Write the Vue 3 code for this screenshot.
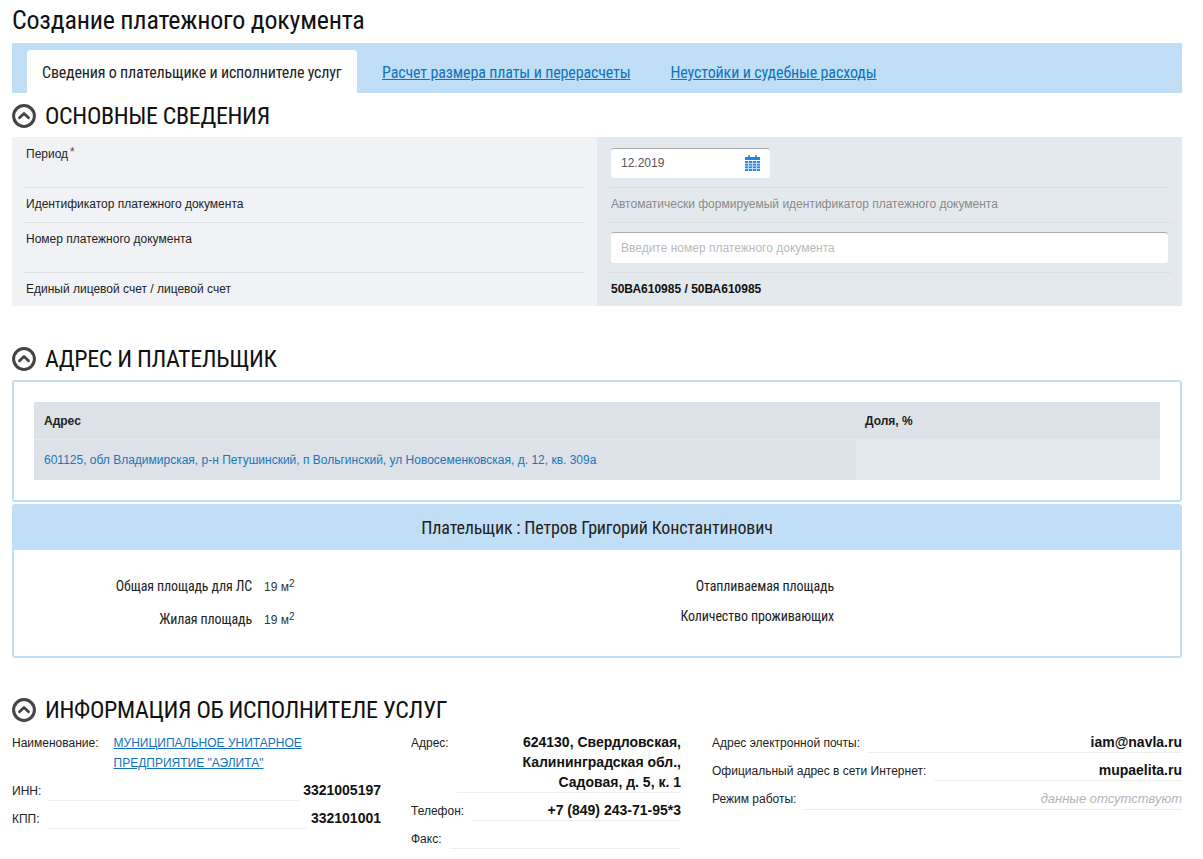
<script setup>
const leftRows = [
  { cls: 'h51', label: 'Период', req: true },
  { cls: 'h35', label: 'Идентификатор платежного документа' },
  { cls: 'h50', label: 'Номер платежного документа' },
  { cls: 'h33', label: 'Единый лицевой счет / лицевой счет' }
]
const sections = { main: 'ОСНОВНЫЕ СВЕДЕНИЯ', addr: 'АДРЕС И ПЛАТЕЛЬЩИК', info: 'ИНФОРМАЦИЯ ОБ ИСПОЛНИТЕЛЕ УСЛУГ' }
</script>

<template>
  <div class="page">
    <h1 class="title">Создание платежного документа</h1>
    <div class="tabs">
      <div class="tab active">Сведения о плательщике и исполнителе услуг</div>
      <a class="tab link">Расчет размера платы и перерасчеты</a>
      <a class="tab link">Неустойки и судебные расходы</a>
    </div>

    <div class="sec-head first">
      <svg class="chev" width="24" height="24" viewBox="0 0 24 24"><circle cx="12" cy="12" r="10.400" fill="none" stroke="#444" stroke-width="3"/><path d="M7.500 13.800 L12 9.500 L16.500 13.800" fill="none" stroke="#444" stroke-width="2.800" stroke-linejoin="round" stroke-linecap="round"/></svg>
      <span>{{ sections.main }}</span>
    </div>
    <div class="main-grid">
      <div class="col-l">
        <div v-for="r in leftRows" :key="r.label" class="cell" :class="r.cls">
          <span>{{ r.label }}</span><sup v-if="r.req" class="req">*</sup>
        </div>
      </div>
      <div class="col-r">
        <div class="cell h51 in">
          <div class="input date">
            <span>12.2019</span>
            <svg class="cal" width="15" height="16" viewBox="0 0 15 16">
              <path d="M3 0h2v2H3zM10 0h2v2h-2z" fill="#4aa3e8"/>
              <path d="M0 2h15v3H0z" fill="#1f86e0"/>
              <path d="M0 6h15v10H0z" fill="#2b8ce2"/>
              <path d="M0 8.500h15M0 11h15M0 13.500h15M3.500 6v10M7.500 6v10M11.500 6v10" stroke="#c9e0f7" stroke-width="0.900" fill="none"/>
            </svg>
          </div>
        </div>
        <div class="cell h35 muted">Автоматически формируемый идентификатор платежного документа</div>
        <div class="cell h50 in second-in"><div class="input wide placeholder">Введите номер платежного документа</div></div>
        <div class="cell h33 strong">50ВА610985 / 50ВА610985</div>
      </div>
    </div>

    <div class="sec-head second">
      <svg class="chev" width="24" height="24" viewBox="0 0 24 24"><circle cx="12" cy="12" r="10.400" fill="none" stroke="#444" stroke-width="3"/><path d="M7.500 13.800 L12 9.500 L16.500 13.800" fill="none" stroke="#444" stroke-width="2.800" stroke-linejoin="round" stroke-linecap="round"/></svg>
      <span>{{ sections.addr }}</span>
    </div>
    <div class="box addr-box">
      <div class="atable">
        <div class="th a">Адрес</div><div class="th b">Доля, %</div>
        <div class="td a"><span class="addr-link">601125, обл Владимирская, р-н Петушинский, п Вольгинский, ул Новосеменковская, д. 12, кв. 309а</span></div>
        <div class="td b"></div>
      </div>
    </div>
    <div class="box payer">
      <div class="payer-head">Плательщик : Петров Григорий Константинович</div>
      <div class="payer-body">
        <div class="pcol">
          <div class="prow r1"><span class="plabel one">Общая площадь для ЛС</span><span class="pval">19 м<sup>2</sup></span></div>
          <div class="prow r2"><span class="plabel one">Жилая площадь</span><span class="pval">19 м<sup>2</sup></span></div>
        </div>
        <div class="pcol">
          <div class="prow r1"><span class="plabel two">Отапливаемая площадь</span></div>
          <div class="prow r3"><span class="plabel two">Количество проживающих</span></div>
        </div>
      </div>
    </div>

    <div class="sec-head third">
      <svg class="chev" width="24" height="24" viewBox="0 0 24 24"><circle cx="12" cy="12" r="10.400" fill="none" stroke="#444" stroke-width="3"/><path d="M7.500 13.800 L12 9.500 L16.500 13.800" fill="none" stroke="#444" stroke-width="2.800" stroke-linejoin="round" stroke-linecap="round"/></svg>
      <span>{{ sections.info }}</span>
    </div>
    <div class="info">
      <div class="icol c1">
        <div class="irow name"><span class="ilabel">Наименование:</span><a class="ilink">МУНИЦИПАЛЬНОЕ УНИТАРНОЕ ПРЕДПРИЯТИЕ "АЭЛИТА"</a></div>
        <div class="irow"><span class="ilabel">ИНН:</span><span class="fill"></span><b>3321005197</b></div>
        <div class="irow"><span class="ilabel">КПП:</span><span class="fill"></span><b>332101001</b></div>
      </div>
      <div class="icol c2">
        <div class="irow"><span class="ilabel">Адрес:</span><span class="ival multi"><b>624130, Свердловская, Калининградская обл., Садовая, д. 5, к. 1</b></span></div>
        <div class="irow"><span class="ilabel">Телефон:</span><span class="ival"><b>+7 (849) 243-71-95*3</b></span></div>
        <div class="irow"><span class="ilabel">Факс:</span><span class="ival"></span></div>
      </div>
      <div class="icol c3">
        <div class="irow"><span class="ilabel">Адрес электронной почты:</span><span class="ival"><b>iam@navla.ru</b></span></div>
        <div class="irow"><span class="ilabel">Официальный адрес в сети Интернет:</span><span class="ival"><b>mupaelita.ru</b></span></div>
        <div class="irow"><span class="ilabel">Режим работы:</span><span class="ival"><i>данные отсутствуют</i></span></div>
      </div>
    </div>
  </div>
</template>

<style scoped>
.page {
  width: 1170px;
  padding: 0 9px 0 12px;
  height: 859px;
  overflow: hidden;
  font-family: "Liberation Sans", Arial, sans-serif;
  font-size: 12px;
  color: #222;
}
.title, .tab, .sec-head span, .payer-head, .plabel {
  font-family: "Roboto Condensed", "Liberation Sans Narrow", Roboto, sans-serif;
  font-stretch: condensed;
}
.title { margin: 0; padding-top: 5px; height: 43px; box-sizing: border-box; font-size: 26px; line-height: 30px; font-weight: 400; color: #111; letter-spacing: -0.23px; }
.tabs { height: 50px; background: #c0dff7; display: flex; padding: 7px 0 0 15px; box-sizing: border-box; }
.tab { font-size: 16px; line-height: 45px; padding: 0 15px; letter-spacing: -0.19px; }
.tab.active { width: 330px; box-sizing: border-box; background: #fff; border-radius: 4px 4px 0 0; color: #222; white-space: nowrap; }
.tab.link { color: #1173bd; text-decoration: underline; margin: 0 0 0 10px; white-space: nowrap; letter-spacing: -0.13px; }
.sec-head { display: flex; align-items: center; height: 24px; gap: 9px; }
.sec-head span { font-size: 24px; color: #111; line-height: 24px; letter-spacing: -0.34px; }
.first { margin-top: 11px; margin-bottom: 9px; }
.second { margin-top: 41px; margin-bottom: 9px; }
.third { margin-top: 40px; margin-bottom: 10px; }
.chev { flex: none; }
.main-grid { display: grid; grid-template-columns: 585px 585px; height: 169px; }
.col-l { background: #f0f2f6; padding: 0 12px; }
.col-r { background: #e4e9ed; padding: 0 10px 0 12px; }
.cell { box-sizing: border-box; border-bottom: 1px solid #dcdfe3; padding: 9px 2px 0; line-height: 14px; color: #222; }
.cell:first-child { padding-top: 10px; }
.cell:last-child { border-bottom: 0; }
.h51 { height: 51px; }
.h50 { height: 50px; }
.h35 { height: 35px; }
.h33 { height: 33px; }
.req { color: #8b2f3f; font-size: 12px; line-height: 0; margin-left: 2px; vertical-align: 2px; }
.in { padding: 11px 2px 0; }
.cell.in:first-child { padding-top: 11px; }
.second-in { padding-top: 9px; }
.input { background: #fff; box-sizing: border-box; height: 30px; border-radius: 3px; border-top: 1px solid #a9a9a9; padding: 0 10px 1px; display: flex; align-items: center; justify-content: space-between; color: #555; }
.cal { margin-top: -1px; }
.date { width: 159px; }
.wide { width: 557px; height: 31px; }
.placeholder { color: #bbb; }
.muted { color: #8a8a8a; }
.strong { font-weight: 700; color: #111; }
.box { border: 2px solid #c0dff7; border-radius: 3px; box-sizing: border-box; }
.addr-box { height: 122px; padding: 20px; }
.atable { display: grid; grid-template-columns: 822px 304px; grid-template-rows: 38px 40px; }
.th, .td { padding: 0 10px; display: flex; align-items: center; }
.th.b { padding-left: 9px; }
.th { background: #dde1e8; font-weight: 700; color: #222; border-bottom: 1px solid #e6e9ec; }
.td.a { background: #dde1e8; }
.td.b { background: #e4e9ed; }
.addr-link { color: #1a76b8; }
.payer { margin-top: 2px; height: 154px; }
.payer-head { height: 44px; background: #c0dff7; text-align: center; font-size: 18px; line-height: 44px; color: #222; letter-spacing: -0.18px; }
.payer-body { display: grid; grid-template-columns: 585px 585px; padding-top: 26px; }
.prow { display: flex; align-items: baseline; }
.plabel { font-size: 14px; text-align: right; color: #222; letter-spacing: -0.12px; }
.plabel.one { width: 238px; }
.plabel.two { width: 235px; }
.pval { margin-left: 12px; color: #333; }
.pval sup { font-size: 10px; line-height: 0; vertical-align: 4px; }
.r1 { height: 33px; line-height: 20px; }
.r2 { height: 20px; line-height: 20px; }
.r3 { height: 20px; line-height: 20px; margin-top: -3px; }
.info { display: grid; grid-template-columns: 369px 270px 471px; column-gap: 30px; width: 1170px; font-size: 12px; color: #222; }
.irow { display: flex; align-items: flex-start; line-height: 20px; margin-bottom: 7px; }
.ilabel { flex: none; margin-top: 1px; }
.c3 .ilabel { margin-left: 1px; }
.name { margin-bottom: 7px; }
.ilink { margin: 1px 0 0 15px; color: #1173bd; text-decoration: underline; width: 210px; }
.fill { flex: 1; height: 20px; border-bottom: 1px solid #eee; margin: 0 4px 0 8px; }
b { font-size: 14px; line-height: 20px; font-weight: 700; color: #111; }
.ival { flex: 1; text-align: right; font-size: 14px; line-height: 20px; min-height: 20px; border-bottom: 1px solid #eee; margin-left: 8px; }
.multi { padding-left: 50px; }
.ival i { color: #b5b5b5; font-size: 13px; }
</style>
